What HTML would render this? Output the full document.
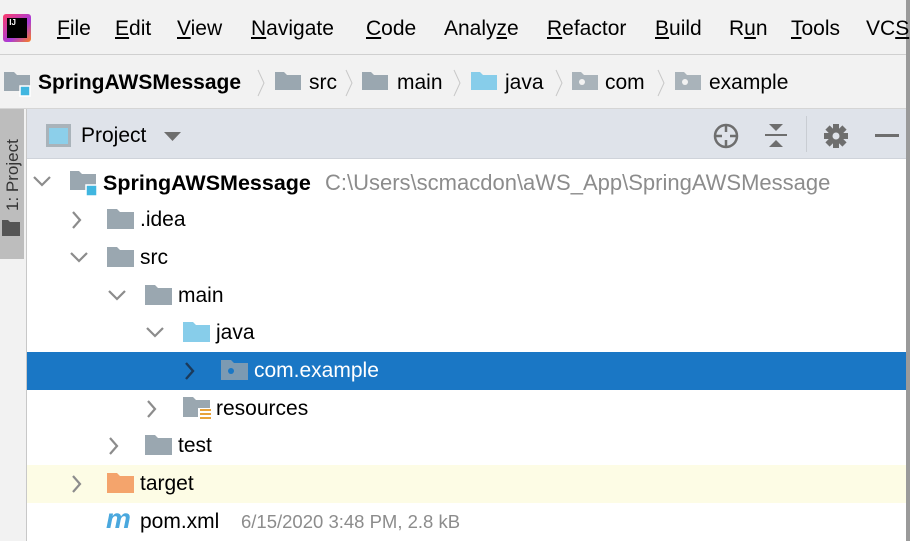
<!DOCTYPE html><html><head><style>
body{margin:0;width:910px;height:541px;overflow:hidden;background:#fff;font-family:"Liberation Sans",sans-serif;position:relative;color:#000}
.a{position:absolute;white-space:nowrap}
.m{font-size:21px;top:17px}
.m u{text-decoration:underline;text-underline-offset:2px}
.b{font-size:21px;top:71px}
.t{font-size:21px}
svg{position:absolute}
</style></head><body>
<div class="a" style="left:0;top:0;width:910px;height:54px;background:#f2f2f2;border-bottom:1px solid #d0d0d0"></div>
<div class="a" style="left:0;top:55px;width:910px;height:53px;background:#f2f2f2;border-bottom:1px solid #d5d5d5"></div>
<div class="a" style="left:0;top:109px;width:26px;height:432px;background:#f2f2f2;border-right:1px solid #c8c8c8"></div>
<div class="a" style="left:0;top:109px;width:24px;height:150px;background:#bdbdbd"></div>
<div class="a" style="left:27px;top:109px;width:880px;height:49px;background:#dfe3ea;border-bottom:1px solid #cfd3da"></div>
<div class="a" style="left:906px;top:0;width:4px;height:541px;background:#9a9a9a"></div>
<!-- logo -->
<div class="a" style="left:3px;top:14px;width:28px;height:28px;background:linear-gradient(135deg,#fc3c6a,#a93bd9 60%,#fc801d);border-radius:3px"></div>
<div class="a" style="left:7px;top:18px;width:20px;height:20px;background:#000;color:#fff;font-size:8px;font-weight:bold;line-height:10px">&nbsp;IJ</div>
<div class="a m" style="left:57px"><u>F</u>ile</div>
<div class="a m" style="left:115px"><u>E</u>dit</div>
<div class="a m" style="left:177px"><u>V</u>iew</div>
<div class="a m" style="left:251px"><u>N</u>avigate</div>
<div class="a m" style="left:366px"><u>C</u>ode</div>
<div class="a m" style="left:444px">Analy<u>z</u>e</div>
<div class="a m" style="left:547px"><u>R</u>efactor</div>
<div class="a m" style="left:655px"><u>B</u>uild</div>
<div class="a m" style="left:729px">R<u>u</u>n</div>
<div class="a m" style="left:791px"><u>T</u>ools</div>
<div class="a m" style="left:866px">VC<u>S</u></div>
<!-- breadcrumb -->
<svg style="left:4px;top:70px" width="28" height="28"><path d="M0 2h10l3 3h13v16H0z" fill="#9aa7b0"/><rect x="16" y="16" width="10" height="10" fill="#40b6e0" stroke="#fff" stroke-width="1.5"/></svg>
<div class="a b" style="left:38px;font-weight:bold">SpringAWSMessage</div>
<svg style="left:256px;top:68px" width="10" height="30"><path d="M2 2l6 13-6 13" fill="none" stroke="#c8c8c8"/></svg>
<svg style="left:275px;top:71px" width="26" height="20"><path d="M0 1h9l3 3h14v15H0z" fill="#9aa7b0"/></svg>
<div class="a b" style="left:309px">src</div>
<svg style="left:344px;top:68px" width="10" height="30"><path d="M2 2l6 13-6 13" fill="none" stroke="#c8c8c8"/></svg>
<svg style="left:362px;top:71px" width="26" height="20"><path d="M0 1h9l3 3h14v15H0z" fill="#9aa7b0"/></svg>
<div class="a b" style="left:397px">main</div>
<svg style="left:452px;top:68px" width="10" height="30"><path d="M2 2l6 13-6 13" fill="none" stroke="#c8c8c8"/></svg>
<svg style="left:471px;top:71px" width="26" height="20"><path d="M0 1h9l3 3h14v15H0z" fill="#87cdea"/></svg>
<div class="a b" style="left:505px">java</div>
<svg style="left:554px;top:68px" width="10" height="30"><path d="M2 2l6 13-6 13" fill="none" stroke="#c8c8c8"/></svg>
<svg style="left:572px;top:71px" width="26" height="20"><path d="M0 1h9l3 3h14v15H0z" fill="#a9b3ba"/><circle cx="10" cy="11" r="3" fill="#f2f2f2"/></svg>
<div class="a b" style="left:605px">com</div>
<svg style="left:656px;top:68px" width="10" height="30"><path d="M2 2l6 13-6 13" fill="none" stroke="#c8c8c8"/></svg>
<svg style="left:675px;top:71px" width="26" height="20"><path d="M0 1h9l3 3h14v15H0z" fill="#a9b3ba"/><circle cx="10" cy="11" r="3" fill="#f2f2f2"/></svg>
<div class="a b" style="left:709px">example</div>
<!-- side tab -->
<div class="a" style="left:-28px;top:160px;transform:rotate(-90deg);font-size:17px;color:#333;width:82px">1: Project</div>
<svg style="left:2px;top:220px" width="18" height="16"><path d="M0 0h6l2 2h10v14H0z" fill="#555"/></svg>
<!-- toolbar -->
<svg style="left:45px;top:123px" width="27" height="25"><rect x="1" y="1" width="25" height="23" fill="#a9b3ba"/><rect x="4" y="5" width="19" height="16" fill="#8ccfea"/></svg>
<div class="a" style="left:81px;top:124px;font-size:21px">Project</div>
<svg style="left:164px;top:132px" width="18" height="10"><path d="M0 0h17l-8.5 9z" fill="#6e6e6e"/></svg>
<svg style="left:711px;top:121px" width="30" height="30"><circle cx="15" cy="15" r="11" fill="none" stroke="#6e6e6e" stroke-width="2.5"/><path d="M15 4v7M15 19v7M4 15h7M19 15h7" stroke="#6e6e6e" stroke-width="2.5"/></svg>
<svg style="left:763px;top:122px" width="26" height="28"><path d="M2 13h22" stroke="#6e6e6e" stroke-width="2"/><path d="M6 2h14l-7 7z M6 25h14l-7-7z" fill="#6e6e6e"/></svg>
<div class="a" style="left:806px;top:116px;width:1px;height:36px;background:#c9cdd3"></div>
<svg style="left:822px;top:122px" width="28" height="28"><g fill="#6e6e6e" transform="translate(14 14)"><circle r="8"/><g id="k"><rect x="-3" y="-12" width="6" height="6"/></g><use href="#k" transform="rotate(45)"/><use href="#k" transform="rotate(90)"/><use href="#k" transform="rotate(135)"/><use href="#k" transform="rotate(180)"/><use href="#k" transform="rotate(225)"/><use href="#k" transform="rotate(270)"/><use href="#k" transform="rotate(315)"/><circle r="3.5" fill="#dfe3ea"/></g></svg>
<div class="a" style="left:875px;top:134px;width:24px;height:3px;background:#6e6e6e"></div>
<!-- tree -->
<div class="a" style="left:27px;top:352px;width:879px;height:38px;background:#1a77c5"></div>
<div class="a" style="left:27px;top:465px;width:879px;height:38px;background:#fdfce5"></div>
<svg style="left:32px;top:175px" width="20" height="14"><path d="M2 2l8 8 8-8" fill="none" stroke="#8c8c8c" stroke-width="2.2"/></svg>
<svg style="left:70px;top:170px" width="30" height="28"><path d="M0 1h9l3 3h14v16H0z" fill="#9aa7b0"/><rect x="16" y="15" width="11" height="11" fill="#40b6e0" stroke="#fff" stroke-width="1.5"/></svg>
<div class="a t" style="left:103px;top:171px;font-weight:bold;font-size:21.5px">SpringAWSMessage</div>
<div class="a" style="left:325px;top:170px;color:#8c8c8c;font-size:22px">C:\Users\scmacdon\aWS_App\SpringAWSMessage</div>

<svg style="left:70px;top:210px" width="14" height="20"><path d="M3 2l7 8-7 8" fill="none" stroke="#8c8c8c" stroke-width="2.2"/></svg>
<svg style="left:107px;top:208px" width="28" height="22"><path d="M0 1h10l3 3h14v17H0z" fill="#9aa7b0"/></svg>
<div class="a t" style="left:140px;top:208px">.idea</div>

<svg style="left:69px;top:251px" width="20" height="14"><path d="M2 2l8 8 8-8" fill="none" stroke="#8c8c8c" stroke-width="2.2"/></svg>
<svg style="left:107px;top:246px" width="28" height="22"><path d="M0 1h10l3 3h14v17H0z" fill="#9aa7b0"/></svg>
<div class="a t" style="left:140px;top:246px">src</div>

<svg style="left:107px;top:289px" width="20" height="14"><path d="M2 2l8 8 8-8" fill="none" stroke="#8c8c8c" stroke-width="2.2"/></svg>
<svg style="left:145px;top:284px" width="28" height="22"><path d="M0 1h10l3 3h14v17H0z" fill="#9aa7b0"/></svg>
<div class="a t" style="left:178px;top:284px">main</div>

<svg style="left:145px;top:326px" width="20" height="14"><path d="M2 2l8 8 8-8" fill="none" stroke="#8c8c8c" stroke-width="2.2"/></svg>
<svg style="left:183px;top:321px" width="28" height="22"><path d="M0 1h10l3 3h14v17H0z" fill="#87cdea"/></svg>
<div class="a t" style="left:216px;top:321px">java</div>

<svg style="left:183px;top:361px" width="14" height="20"><path d="M3 2l7 8-7 8" fill="none" stroke="#1b3a5a" stroke-width="2.4"/></svg>
<svg style="left:221px;top:359px" width="28" height="22"><path d="M0 1h10l3 3h14v17H0z" fill="#7c9ab2"/><circle cx="10" cy="12" r="3" fill="#1a77c5"/></svg>
<div class="a t" style="left:254px;top:359px;color:#fff">com.example</div>

<svg style="left:145px;top:399px" width="14" height="20"><path d="M3 2l7 8-7 8" fill="none" stroke="#8c8c8c" stroke-width="2.2"/></svg>
<svg style="left:183px;top:396px" width="30" height="26"><path d="M0 1h10l3 3h14v17H0z" fill="#9aa7b0"/><rect x="15" y="12" width="14" height="13" fill="#fff"/><path d="M17 14h11M17 18h11M17 22h11" stroke="#e8a33b" stroke-width="2"/></svg>
<div class="a t" style="left:216px;top:397px">resources</div>

<svg style="left:107px;top:436px" width="14" height="20"><path d="M3 2l7 8-7 8" fill="none" stroke="#8c8c8c" stroke-width="2.2"/></svg>
<svg style="left:145px;top:434px" width="28" height="22"><path d="M0 1h10l3 3h14v17H0z" fill="#9aa7b0"/></svg>
<div class="a t" style="left:178px;top:434px">test</div>

<svg style="left:70px;top:474px" width="14" height="20"><path d="M3 2l7 8-7 8" fill="none" stroke="#8c8c8c" stroke-width="2.2"/></svg>
<svg style="left:107px;top:472px" width="28" height="22"><path d="M0 1h10l3 3h14v17H0z" fill="#f4a46c"/></svg>
<div class="a t" style="left:140px;top:472px">target</div>

<div class="a" style="left:106px;top:503px;font-size:28px;font-weight:bold;font-style:italic;color:#4aa8de">m</div>
<div class="a t" style="left:140px;top:510px">pom.xml</div>
<div class="a" style="left:241px;top:511px;font-size:18.5px;color:#8c8c8c">6/15/2020 3:48 PM, 2.8 kB</div>
</body></html>
